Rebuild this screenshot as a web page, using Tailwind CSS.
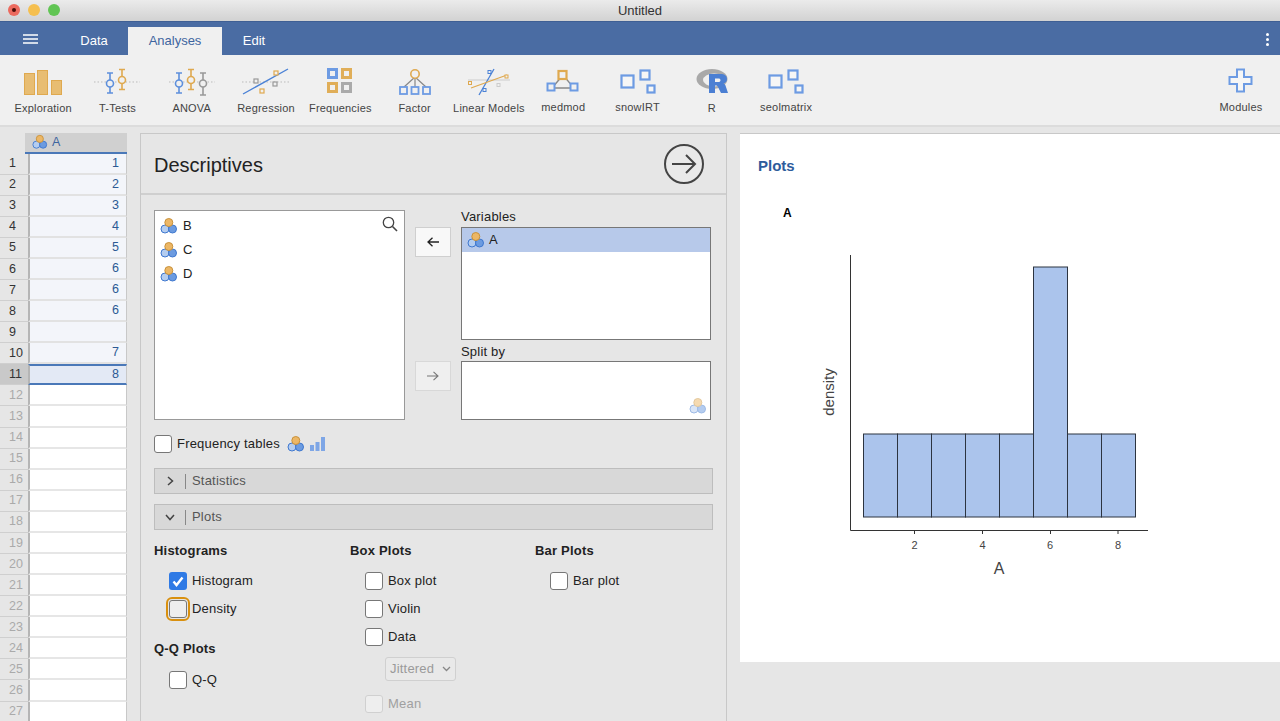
<!DOCTYPE html>
<html lang="en">
<head>
    <meta charset="UTF-8">
    <title>Untitled</title>
    <script src="https://cdn.jsdelivr.net/npm/@tailwindcss/browser@4"></script>
</head>
<body class="w-[1280px] h-[721px] overflow-hidden bg-[#e6e6e6] font-['Liberation_Sans',sans-serif] text-[#222]">
    <!-- shared icons -->
    <svg class="hidden">
        <symbol id="nominal" viewBox="0 0 18 18">
            <circle cx="5" cy="12" r="4" fill="#b4cdf0" stroke="#3f78cf" stroke-width="1"/>
            <circle cx="12.5" cy="12" r="4" fill="#6c9be0" stroke="#3f78cf" stroke-width="1"/>
            <circle cx="8.8" cy="5.5" r="4" fill="#ecb766" stroke="#c9923c" stroke-width="1"/>
        </symbol>
        <symbol id="sq-blue" viewBox="0 0 12 12"><rect x="1" y="1" width="10" height="10" fill="#fff" stroke="#6d9be3" stroke-width="2"/></symbol>
        <symbol id="scatter" viewBox="0 0 42 42"></symbol>
    </svg>

    <!-- title bar -->
    <div class="h-[21px] bg-gradient-to-b from-[#ebebeb] to-[#d2d2d2] relative flex items-center justify-center text-[13px] text-[#333]">
        <div class="absolute left-[8px] top-[4px] flex gap-[8px]">
            <div class="w-[12px] h-[12px] rounded-full bg-[#ec6a5e] flex items-center justify-center"><div class="w-[4px] h-[4px] rounded-full bg-[#4a0d08]"></div></div>
            <div class="w-[12px] h-[12px] rounded-full bg-[#f5bf4f]"></div>
            <div class="w-[12px] h-[12px] rounded-full bg-[#61c554]"></div>
        </div>
        Untitled
    </div>

    <!-- tab bar -->
    <div class="h-[34px] bg-[#4a6ca3] relative flex items-end text-[13px] text-white border-t border-[#3f5f94]">
        <div class="w-[60px] h-[33px] flex items-center justify-center">
            <svg width="15" height="10" viewBox="0 0 15 10"><path d="M0 1h15M0 5h15M0 9h15" stroke="#fff" stroke-width="1.6"/></svg>
        </div>
        <div class="w-[68px] h-[28px] flex items-center justify-center">Data</div>
        <div class="w-[94px] h-[28px] flex items-center justify-center bg-[#f0f0f0] text-[#3e659f]">Analyses</div>
        <div class="w-[64px] h-[28px] flex items-center justify-center">Edit</div>
        <div class="absolute right-[11px] top-[11px] flex flex-col gap-[2px]">
            <div class="w-[3px] h-[3px] rounded-full bg-white"></div>
            <div class="w-[3px] h-[3px] rounded-full bg-white"></div>
            <div class="w-[3px] h-[3px] rounded-full bg-white"></div>
        </div>
    </div>

    <!-- ribbon -->
    <div class="h-[72px] bg-[#f0f0f0] border-b-2 border-[#dcdcdc] pl-[6px] pr-[1px] flex text-[11px] tracking-[0.2px] text-[#444]">
        <div class="w-[74.3px] flex flex-col items-center">
            <svg class="mt-[13px]" width="40" height="28" viewBox="0 0 40 28"><g fill="#e8bd72" stroke="#dfa94f"><rect x="1.5" y="5.5" width="10" height="21"/><rect x="14.500" y="2.500" width="10" height="24"/><rect x="28.500" y="12.500" width="10" height="14"/></g></svg>
            <span class="mt-[4px]">Exploration</span>
        </div>
        <div class="w-[74.3px] flex flex-col items-center">
            <svg class="mt-[13px]" width="46" height="28" viewBox="0 0 46 28"><path d="M0 14h46" stroke="#bbb" stroke-dasharray="1.500 2"/><g fill="none" stroke-width="1.600"><path d="M13 5h6M16 5v20M13 25h6" stroke="#5d8fdc"/><circle cx="16" cy="15.500" r="3.500" fill="#f0f0f0" stroke="#5d8fdc"/><path d="M25 1.500h6M28 1.500v20M25 21.500h6" stroke="#dfa94f"/><circle cx="28" cy="12" r="3.500" fill="#f0f0f0" stroke="#dfa94f"/></g></svg>
            <span class="mt-[4px]">T-Tests</span>
        </div>
        <div class="w-[74.3px] flex flex-col items-center">
            <svg class="mt-[13px]" width="46" height="28" viewBox="0 0 46 28"><path d="M0 14h46" stroke="#bbb" stroke-dasharray="1.500 2"/><g fill="none" stroke-width="1.600"><path d="M7 5h6M10 5v20M7 25h6" stroke="#5d8fdc"/><circle cx="10" cy="15.500" r="3.500" fill="#f0f0f0" stroke="#5d8fdc"/><path d="M19 1.500h6M22 1.500v20M19 21.500h6" stroke="#dfa94f"/><circle cx="22" cy="12" r="3.500" fill="#f0f0f0" stroke="#dfa94f"/><path d="M31 5h6M34 5v22M31 27h6" stroke="#999"/><circle cx="34" cy="15.500" r="3.500" fill="#f0f0f0" stroke="#999"/></g></svg>
            <span class="mt-[4px]">ANOVA</span>
        </div>
        <div class="w-[74.3px] flex flex-col items-center">
            <svg class="mt-[13px]" width="48" height="28" viewBox="0 0 48 28"><path d="M0 14h48" stroke="#bbb" stroke-dasharray="1.500 2"/><path d="M1 26L46 1" stroke="#4b82d6" stroke-width="1.400"/><g fill="#f0f0f0" stroke-width="1.200"><rect x="12" y="11" width="4" height="4" stroke="#999"/><rect x="31" y="14" width="4" height="4" stroke="#999"/><rect x="32" y="3" width="4" height="4" stroke="#dfa94f"/><rect x="18" y="21" width="4" height="4" stroke="#dfa94f"/></g></svg>
            <span class="mt-[4px]">Regression</span>
        </div>
        <div class="w-[74.3px] flex flex-col items-center">
            <svg class="mt-[13px]" width="26" height="26" viewBox="0 0 26 26"><g stroke-width="3" fill="#f0f0f0"><rect x="1.500" y="1.500" width="8" height="8" stroke="#6d9be3"/><rect x="15.500" y="1.500" width="8" height="8" stroke="#e0ae58"/><rect x="1.500" y="15.500" width="8" height="8" stroke="#e0ae58"/><rect x="15.500" y="15.500" width="8" height="8" stroke="#aaa"/></g></svg>
            <span class="mt-[6px]">Frequencies</span>
        </div>
        <div class="w-[74.3px] flex flex-col items-center">
            <svg class="mt-[13px]" width="32" height="28" viewBox="0 0 32 28"><path d="M16 9L5 19M16 9v10M16 9L27 19" stroke="#888" stroke-width="1.200"/><circle cx="16" cy="6" r="4.200" fill="#f0f0f0" stroke="#dfa94f" stroke-width="1.600"/><g fill="#f0f0f0" stroke="#6d9be3" stroke-width="1.800"><rect x="1" y="19" width="7" height="7"/><rect x="12.500" y="19" width="7" height="7"/><rect x="24" y="19" width="7" height="7"/></g></svg>
            <span class="mt-[4px]">Factor</span>
        </div>
        <div class="w-[74.3px] flex flex-col items-center">
            <svg class="mt-[13px]" width="44" height="28" viewBox="0 0 44 28"><path d="M1 12h42" stroke="#ccc"/><path d="M12 27L27 1" stroke="#4b82d6" stroke-width="1.300"/><path d="M4 20L40 7" stroke="#dfa94f" stroke-width="1.300"/><g fill="#f0f0f0" stroke-width="1"><rect x="1.500" y="13.500" width="3" height="3" stroke="#dfa94f"/><rect x="38" y="7" width="3" height="3" stroke="#dfa94f"/><rect x="21" y="2.500" width="3" height="3" stroke="#4b82d6"/><rect x="16" y="20.500" width="3" height="3" stroke="#4b82d6"/><rect x="30" y="15.500" width="3" height="3" stroke="#ccc"/></g></svg>
            <span class="mt-[4px]">Linear Models</span>
        </div>
        <div class="w-[74.3px] flex flex-col items-center">
            <svg class="mt-[14px]" width="34" height="27" viewBox="0 0 34 27"><path d="M17 6L6 19h22z" fill="none" stroke="#888" stroke-width="1.400"/><rect x="12.500" y="2" width="8" height="8" fill="#f0f0f0" stroke="#dfa94f" stroke-width="2.200"/><rect x="1.500" y="14.500" width="7" height="7" fill="#f0f0f0" stroke="#6d9be3" stroke-width="2"/><rect x="24.500" y="14.500" width="7" height="7" fill="#f0f0f0" stroke="#6d9be3" stroke-width="2"/></svg>
            <span class="mt-[3px]">medmod</span>
        </div>
        <div class="w-[74.3px] flex flex-col items-center">
            <svg class="mt-[14px]" width="36" height="27" viewBox="0 0 36 27"><g fill="#f6f6f6" stroke="#6d9be3" stroke-width="2.200"><rect x="1.500" y="6.500" width="12" height="12"/><rect x="20.500" y="1.500" width="9" height="9"/><rect x="27.500" y="16.500" width="7" height="7"/></g></svg>
            <span class="mt-[3px]">snowIRT</span>
        </div>
        <div class="w-[74.3px] flex flex-col items-center">
            <svg class="mt-[13px]" width="34" height="28" viewBox="0 0 34 28"><ellipse cx="17" cy="11" rx="15.500" ry="10" fill="#a9a9a9"/><ellipse cx="19" cy="12" rx="11" ry="6.500" fill="#f0f0f0"/><path fill-rule="evenodd" d="M14 6h11c5 0 7 2 7 5 0 2.500-1.500 4-3.500 4.500 1 .5 1.500 1 2 2L33 25h-7l-3-6c-.5-1-1-1.500-2-1.500h-1V25h-6zM20 10.500v3.500h3.500c1.200 0 2-.7 2-1.800s-.8-1.700-2-1.700z" fill="#4b7fd3"/></svg>
            <span class="mt-[4px]">R</span>
        </div>
        <div class="w-[74.3px] flex flex-col items-center">
            <svg class="mt-[14px]" width="36" height="27" viewBox="0 0 36 27"><g fill="#f6f6f6" stroke="#6d9be3" stroke-width="2.200"><rect x="1.500" y="6.500" width="12" height="12"/><rect x="20.500" y="1.500" width="9" height="9"/><rect x="27.500" y="16.500" width="7" height="7"/></g></svg>
            <span class="mt-[3px]">seolmatrix</span>
        </div>
        <div class="ml-auto w-[76px] flex flex-col items-center">
            <svg class="mt-[13px]" width="26" height="26" viewBox="0 0 26 26"><path d="M9 1.500h7v7.500h7.500v7H16v7.500H9V16H1.500V9H9z" fill="#f6f6f6" stroke="#6d9be3" stroke-width="2"/></svg>
            <span class="mt-[5px]">Modules</span>
        </div>
    </div>

    <div class="flex h-[594px] overflow-hidden">
        <!-- spreadsheet -->
        <div class="w-[127px] shrink-0 pt-[6px] flex flex-col text-[12.500px]">
            <div class="h-[20.500px] ml-[25px] bg-[#d0d0d0] border-b-2 border-[#4a78b8] flex items-center pl-[7px] gap-[4px] text-[#3e659f] shrink-0">
                <svg width="16" height="16"><use href="#nominal"/></svg>A
            </div>
            <div id="rows"></div>
        </div>

        <!-- analysis panel -->
        <div class="w-[587px] ml-[13px] mt-[6px] border border-[#c8c8c8] border-b-0 bg-[#e6e6e6] shrink-0 text-[13px] tracking-[0.2px]">
            <div class="h-[61px] border-b-2 border-[#cfcfcf] flex items-center justify-between pl-[13px] pr-[21px]">
                <span class="text-[20px] tracking-normal text-[#222] mt-[2px]">Descriptives</span>
                <svg width="42" height="42" viewBox="0 0 42 42"><circle cx="21" cy="21" r="19" fill="#e9e9e9" stroke="#444" stroke-width="2"/><path d="M9 21h23M23 12l9 9-9 9" fill="none" stroke="#444" stroke-width="2"/></svg>
            </div>

            <!-- variable supplier -->
            <div class="flex pl-[13px] pt-[15px]">
                <div class="w-[251px] h-[210px] bg-white border border-[#999] relative pt-[3px] pl-[5px] text-[13px]">
                    <div class="h-[24px] flex items-center gap-[5px]"><svg width="18" height="18"><use href="#nominal"/></svg>B</div>
                    <div class="h-[24px] flex items-center gap-[5px]"><svg width="18" height="18"><use href="#nominal"/></svg>C</div>
                    <div class="h-[24px] flex items-center gap-[5px]"><svg width="18" height="18"><use href="#nominal"/></svg>D</div>
                    <svg class="absolute right-[6px] top-[5px]" width="16" height="16" viewBox="0 0 16 16"><circle cx="6.500" cy="6.500" r="5.200" fill="none" stroke="#444" stroke-width="1.300"/><path d="M10.500 10.500L15 15" stroke="#444" stroke-width="1.600"/></svg>
                </div>
                <div class="w-[56px] flex flex-col items-center pl-[0px]">
                    <div class="mt-[17px] w-[36px] h-[30px] bg-[#f8f8f8] border border-[#cfcfcf] flex items-center justify-center">
                        <svg width="12" height="10" viewBox="0 0 12 10"><path d="M12 5H1M5.500 .8L1 5l4.500 4.200" fill="none" stroke="#222" stroke-width="1.300"/></svg>
                    </div>
                    <div class="mt-[104px] w-[36px] h-[30px] bg-[#efefef] border border-[#d8d8d8] flex items-center justify-center">
                        <svg width="12" height="10" viewBox="0 0 12 10"><path d="M0 5h11M6.500 .8L11 5 6.500 9.200" fill="none" stroke="#777" stroke-width="1.100"/></svg>
                    </div>
                </div>
                <div class="w-[250px]">
                    <div class="h-[17px] leading-[14px]">Variables</div>
                    <div class="h-[113px] bg-white border border-[#777]">
                        <div class="h-[24px] bg-[#b7c9ea] flex items-center pl-[5px] gap-[4px]"><svg width="18" height="18"><use href="#nominal"/></svg>A</div>
                    </div>
                    <div class="h-[21px] pt-[5px] leading-[14px]">Split by</div>
                    <div class="h-[59px] bg-white border border-[#777] relative">
                        <svg class="absolute right-[3px] bottom-[4px] opacity-50" width="18" height="18"><use href="#nominal"/></svg>
                    </div>
                </div>
            </div>

            <!-- frequency tables -->
            <div class="flex items-center pl-[13px] mt-[14px] h-[20px]">
                <div class="w-[18px] h-[18px] bg-white border border-[#777] rounded-[3px]"></div>
                <span class="ml-[5px]">Frequency tables</span>
                <svg class="ml-[7px]" width="18" height="18"><use href="#nominal"/></svg>
                <svg class="ml-[5px]" width="16" height="14" viewBox="0 0 16 14"><g fill="#7ea6e6"><rect x="0" y="8" width="4" height="6"/><rect x="5.500" y="5" width="4" height="9"/><rect x="11" y="0" width="4" height="14"/></g></svg>
            </div>

            <!-- collapsible sections -->
            <div class="mx-[13px] mt-[14px] h-[26px] bg-[#d8d8d8] border border-[#bdbdbd] flex items-center text-[#555]">
                <svg class="ml-[12px]" width="7" height="10" viewBox="0 0 7 10"><path d="M1 1l4.500 4L1 9" fill="none" stroke="#444" stroke-width="1.500"/></svg>
                <div class="w-px h-[15px] bg-[#888] ml-[11px] mr-[6px]"></div>Statistics
            </div>
            <div class="mx-[13px] mt-[10px] h-[26px] bg-[#d8d8d8] border border-[#bdbdbd] flex items-center text-[#555]">
                <svg class="ml-[10px]" width="10" height="7" viewBox="0 0 10 7"><path d="M1 1l4 4.500L9 1" fill="none" stroke="#444" stroke-width="1.500"/></svg>
                <div class="w-px h-[15px] bg-[#888] ml-[10px] mr-[6px]"></div>Plots
            </div>

            <!-- plot options -->
            <div class="flex pl-[13px] pt-[13px]">
                <div class="w-[196px]">
                    <div class="font-bold text-[13px] h-[16px] leading-[16px]">Histograms</div>
                    <div class="flex items-center h-[18px] mt-[13px] ml-[15px]">
                        <div class="w-[18px] h-[18px] rounded-[3px] bg-[#2f7ae5] flex items-center justify-center"><svg width="12" height="11" viewBox="0 0 12 11"><path d="M1.500 5.500l3 3.500 6-7.500" fill="none" stroke="#fff" stroke-width="2.400"/></svg></div>
                        <span class="ml-[5px]">Histogram</span>
                    </div>
                    <div class="flex items-center h-[18px] mt-[10px] ml-[15px]">
                        <div class="w-[18px] h-[18px] rounded-[3px] bg-[#eee] border border-[#777] outline-2 outline-[#d9900f] outline-offset-[1px]"></div>
                        <span class="ml-[5px]">Density</span>
                    </div>
                    <div class="font-bold text-[13px] h-[16px] leading-[16px] mt-[23px]">Q-Q Plots</div>
                    <div class="flex items-center h-[18px] mt-[14px] ml-[15px]">
                        <div class="w-[18px] h-[18px] bg-white border border-[#777] rounded-[3px]"></div>
                        <span class="ml-[5px]">Q-Q</span>
                    </div>
                </div>
                <div class="w-[185px]">
                    <div class="font-bold text-[13px] h-[16px] leading-[16px]">Box Plots</div>
                    <div class="flex items-center h-[18px] mt-[13px] ml-[15px]">
                        <div class="w-[18px] h-[18px] bg-white border border-[#777] rounded-[3px]"></div>
                        <span class="ml-[5px]">Box plot</span>
                    </div>
                    <div class="flex items-center h-[18px] mt-[10px] ml-[15px]">
                        <div class="w-[18px] h-[18px] bg-white border border-[#777] rounded-[3px]"></div>
                        <span class="ml-[5px]">Violin</span>
                    </div>
                    <div class="flex items-center h-[18px] mt-[10px] ml-[15px]">
                        <div class="w-[18px] h-[18px] bg-white border border-[#777] rounded-[3px]"></div>
                        <span class="ml-[5px]">Data</span>
                    </div>
                    <div class="mt-[11px] ml-[35px] w-[71px] h-[24px] bg-[#e9e9e9] border border-[#d0d0d0] rounded-[3px] flex items-center justify-between pl-[4px] pr-[4px] text-[#9a9a9a]">
                        Jittered
                        <svg width="9" height="6" viewBox="0 0 9 6"><path d="M1 1l3.500 3.500L8 1" fill="none" stroke="#888" stroke-width="1.300"/></svg>
                    </div>
                    <div class="flex items-center h-[18px] mt-[14px] ml-[15px] text-[#a0a0a0]">
                        <div class="w-[18px] h-[18px] bg-[#eee] border border-[#d0d0d0] rounded-[3px]"></div>
                        <span class="ml-[5px]">Mean</span>
                    </div>
                </div>
                <div>
                    <div class="font-bold text-[13px] h-[16px] leading-[16px]">Bar Plots</div>
                    <div class="flex items-center h-[18px] mt-[13px] ml-[15px]">
                        <div class="w-[18px] h-[18px] bg-white border border-[#777] rounded-[3px]"></div>
                        <span class="ml-[5px]">Bar plot</span>
                    </div>
                </div>
            </div>
        </div>

        <!-- results -->
        <div class="w-[540px] ml-[13px] mt-[6px] shrink-0 border-t border-[#c8c8c8]">
            <div class="h-[528px] bg-white relative">
                <div class="pl-[18px] pt-[21px] text-[15px] font-bold text-[#2e5c9c]">Plots</div>
                <div class="pl-[43px] pt-[26px] text-[12px] font-bold text-black">A</div>
                <svg class="absolute left-0 top-0" width="540" height="528" viewBox="740 134 540 528" font-family="Liberation Sans, sans-serif">
                    <g fill="#abc4ec" stroke="#2c3440" stroke-width="1">
                        <rect x="863.500" y="434" width="34" height="83"/>
                        <rect x="897.500" y="434" width="34" height="83"/>
                        <rect x="931.500" y="434" width="34" height="83"/>
                        <rect x="965.500" y="434" width="34" height="83"/>
                        <rect x="999.500" y="434" width="34" height="83"/>
                        <rect x="1033.500" y="267" width="34" height="250"/>
                        <rect x="1067.500" y="434" width="34" height="83"/>
                        <rect x="1101.500" y="434" width="34" height="83"/>
                    </g>
                    <path d="M850.500 255V530.500H1148M914.500 530v4M982.500 530v4M1050.500 530v4M1118 530v4" fill="none" stroke="#333"/>
                    <g font-size="11" fill="#444" text-anchor="middle">
                        <text x="914.500" y="549">2</text>
                        <text x="982.500" y="549">4</text>
                        <text x="1050" y="549">6</text>
                        <text x="1118" y="549">8</text>
                    </g>
                    <text x="999" y="574" font-size="16" fill="#444" text-anchor="middle">A</text>
                    <text transform="translate(834 392) rotate(-90)" font-size="15" fill="#444" text-anchor="middle">density</text>
                </svg>
            </div>
        </div>
    </div>

    <script>
        // spreadsheet rows, empty string leaves the cell blank
        const values = ['1', '2', '3', '4', '5', '6', '6', '6', '', '7', '8'];
        let html = '';
        for (let i = 0; i < 27; i++) {
            const filled = i < values.length;
            const selected = i === 10;
            const numCls = selected ? 'bg-[#c9c9c9] text-[#333]' : filled ? 'bg-[#e6e6e6] text-[#333]' : 'bg-[#e6e6e6] text-[#aaa]';
            const cellCls = selected ? 'bg-[#e3e9f5] border-y-2 border-[#4a78b8]' : filled ? 'bg-[#f3f5fa] border-b-2 border-[#e2e2e2]' : 'bg-white border-b-2 border-[#e6e6e6]';
            html += `<div class="flex h-[21.08px]">
                <div class="w-[28px] shrink-0 border-b border-[#cfcfcf] flex items-center pl-[9px] ${numCls}">${i + 1}</div>
                <div class="flex-1 border-l-2 border-l-[#b5b5b5] border-r border-r-[#c8c8c8] flex items-center justify-end pr-[7px] text-[#2c5a94] ${cellCls}">${values[i] || ''}</div>
            </div>`;
        }
        document.getElementById('rows').innerHTML = html;
    </script>
</body>
</html>
